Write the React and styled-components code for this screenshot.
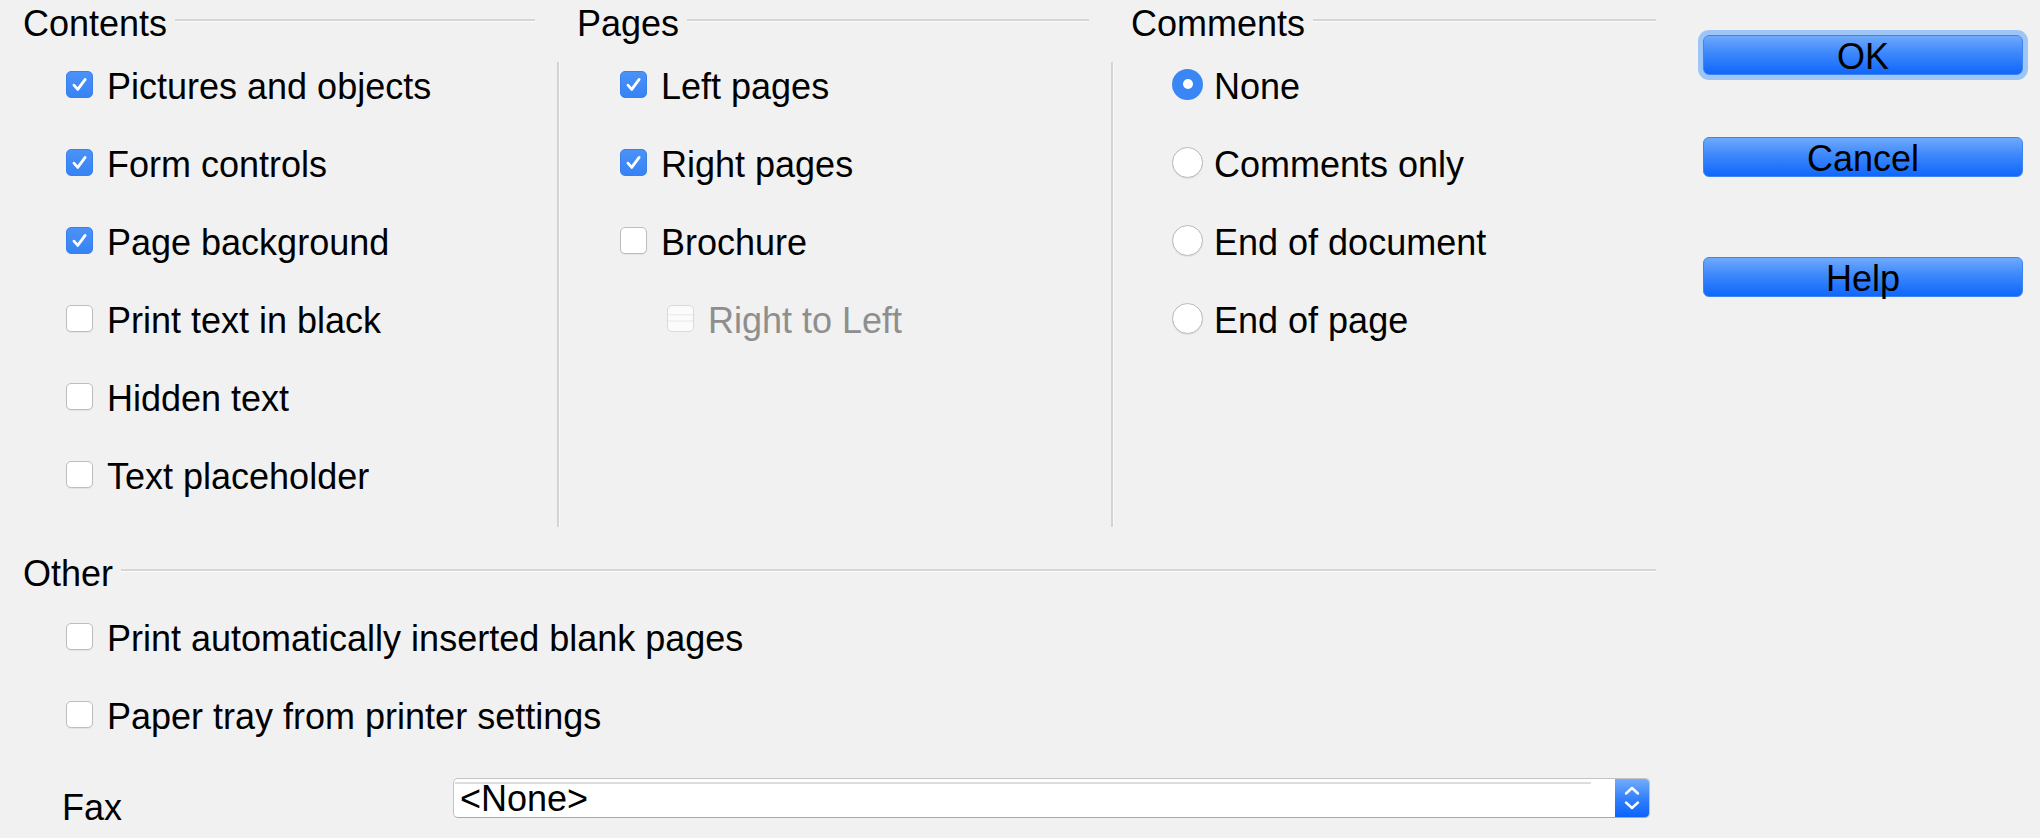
import React from 'react';
import styled, { createGlobalStyle, css } from 'styled-components';

const GlobalStyle = createGlobalStyle`
    html, body {
        margin: 0;
        padding: 0;
        background: #f1f1f1;
    }
    body {
        font-family: "Liberation Sans", Arial, Helvetica, sans-serif;
        color: #000;
    }
`;

const contents = [
    { label: 'Pictures and objects', checked: true },
    { label: 'Form controls', checked: true },
    { label: 'Page background', checked: true },
    { label: 'Print text in black' },
    { label: 'Hidden text' },
    { label: 'Text placeholder' },
];

const pages = [
    { label: 'Left pages', checked: true },
    { label: 'Right pages', checked: true },
    { label: 'Brochure' },
    { label: 'Right to Left', disabled: true, nested: true },
];

const comments = ['None', 'Comments only', 'End of document', 'End of page'];

function Check({ checked, disabled }) {
    return (
        <CheckBox $checked={checked} $disabled={disabled}>
            {checked && (
                <svg width="27" height="27" viewBox="0 0 27 27">
                    <path d="M7.5 14.2 L11.6 18.8 L19.6 8" fill="none" stroke="#fff" strokeWidth="3" strokeLinecap="round" strokeLinejoin="round" />
                </svg>
            )}
        </CheckBox>
    );
}

function CheckOption({ label, checked, disabled, nested }) {
    return (
        <OptionRow $indent={nested ? 90 : 43}>
            <Check checked={checked} disabled={disabled} />
            <Label $disabled={disabled}>{label}</Label>
        </OptionRow>
    );
}

function PrintOptionsDialog() {
    return (
        <Dialog>
            <GlobalStyle />
            <Main>
                <TopRow>
                    <Section $width={512}>
                        <Heading>
                            <Title>Contents</Title>
                            <Rule />
                        </Heading>
                        {contents.map((item) => (
                            <CheckOption key={item.label} {...item} />
                        ))}
                    </Section>
                    <Divider />
                    <Section $width={512}>
                        <Heading>
                            <Title>Pages</Title>
                            <Rule />
                        </Heading>
                        {pages.map((item) => (
                            <CheckOption key={item.label} {...item} />
                        ))}
                    </Section>
                    <Divider />
                    <Section $width={525}>
                        <Heading>
                            <Title>Comments</Title>
                            <Rule />
                        </Heading>
                        {comments.map((label, i) => (
                            <OptionRow key={label} $indent={41}>
                                <Radio $checked={i === 0} />
                                <Label $radio>{label}</Label>
                            </OptionRow>
                        ))}
                    </Section>
                </TopRow>

                <OtherHeading>
                    <Title>Other</Title>
                    <Rule />
                </OtherHeading>
                <OtherRows>
                    <CheckOption label="Print automatically inserted blank pages" />
                    <CheckOption label="Paper tray from printer settings" />
                </OtherRows>
                <FaxRow>
                    <FaxLabel>Fax</FaxLabel>
                    <Select>
                        <SelectValue>&lt;None&gt;</SelectValue>
                        <Spinner>
                            <svg width="18" height="26" viewBox="0 0 18 26">
                                <path d="M3 8.5 L9 3 L15 8.5" fill="none" stroke="#fff" strokeWidth="2.4" strokeLinecap="round" strokeLinejoin="round" />
                                <path d="M3 17.5 L9 23 L15 17.5" fill="none" stroke="#fff" strokeWidth="2.4" strokeLinecap="round" strokeLinejoin="round" />
                            </svg>
                        </Spinner>
                    </Select>
                </FaxRow>
            </Main>

            <ButtonColumn>
                <PushButton $focused>OK</PushButton>
                <PushButton $top={62}>Cancel</PushButton>
                <PushButton $top={80}>Help</PushButton>
            </ButtonColumn>
        </Dialog>
    );
}

const Dialog = styled.div`
    display: flex;
    width: 2040px;
    height: 838px;
    box-sizing: border-box;
    padding-left: 23px;
    overflow: hidden;
    background: #f1f1f1;
`;

const Main = styled.div`
    display: flex;
    flex-direction: column;
    width: 1633px;
    flex: none;
`;

const TopRow = styled.div`
    display: flex;
    height: 527px;
`;

const Section = styled.div`
    display: flex;
    flex-direction: column;
    width: ${(p) => p.$width}px;
    flex: none;
`;

const Heading = styled.div`
    display: flex;
    align-items: center;
    height: 44px;
    margin-bottom: 2px;
`;

const OtherHeading = styled(Heading)`
    margin-top: 23px;
    margin-bottom: 4px;
`;

const Title = styled.span`
    font-size: 36px;
    line-height: 44px;
    padding-top: 3px;
    white-space: nowrap;
`;

const Rule = styled.span`
    flex: 1;
    height: 2px;
    margin: -4px 0 0 8px;
    background: #d6d6d6;
    box-shadow: 0 1px 0 #fafafa;
`;

const Divider = styled.div`
    flex: none;
    width: 2px;
    margin: 62px 18px 0 22px;
    background: #d3d3d3;
    box-shadow: 1px 0 0 #f9f9f9;
`;

const OptionRow = styled.div`
    display: flex;
    align-items: center;
    height: 78px;
    padding-left: ${(p) => p.$indent}px;
`;

const CheckBox = styled.span`
    flex: none;
    width: 27px;
    height: 27px;
    box-sizing: border-box;
    border-radius: 5px;
    margin-bottom: 2px;
    display: flex;
    align-items: center;
    justify-content: center;
    ${(p) =>
        p.$checked
            ? css`
                  background: linear-gradient(#4b92f8, #3683f4);
                  border: 1px solid #3a80ea;
              `
            : p.$disabled
            ? css`
                  border: 1px solid #dadada;
                  background: linear-gradient(
                      #fbfbfb 0%, #fbfbfb 30%, #ebebeb 34%, #fbfbfb 40%,
                      #fbfbfb 55%, #ebebeb 60%, #fbfbfb 66%, #fbfbfb 100%
                  );
              `
            : css`
                  background: #fff;
                  border: 1px solid #bdbdbd;
                  box-shadow: 0 1px 1px rgba(0, 0, 0, 0.06);
              `}
`;

const Radio = styled.span`
    flex: none;
    width: 31px;
    height: 31px;
    box-sizing: border-box;
    border-radius: 50%;
    margin-bottom: 2px;
    position: relative;
    ${(p) =>
        p.$checked
            ? css`
                  background: #3b86f5;
                  &::after {
                      content: '';
                      position: absolute;
                      left: 10.5px;
                      top: 10.5px;
                      width: 10px;
                      height: 10px;
                      border-radius: 50%;
                      background: #fff;
                  }
              `
            : css`
                  background: #fff;
                  border: 1px solid #b9b9b9;
                  box-shadow: 0 1px 1px rgba(0, 0, 0, 0.06);
              `}
`;

const Label = styled.span`
    font-size: 36px;
    line-height: 44px;
    padding-top: 3px;
    white-space: nowrap;
    margin-left: ${(p) => (p.$radio ? 11 : 14)}px;
    color: ${(p) => (p.$disabled ? '#8e8e8e' : '#000')};
`;

const OtherRows = styled.div`
    display: flex;
    flex-direction: column;
`;

const FaxRow = styled.div`
    display: flex;
    align-items: flex-start;
    margin-top: 24px;
`;

const FaxLabel = styled.span`
    width: 391px;
    padding-left: 39px;
    margin-top: 8px;
    font-size: 36px;
    line-height: 44px;
`;

const Select = styled.div`
    display: flex;
    width: 1197px;
    height: 40px;
    box-sizing: border-box;
    border: 1px solid #c4c4c4;
    border-bottom-color: #a8a8a8;
    border-radius: 5px;
    background: #fff;
    overflow: hidden;
`;

const SelectValue = styled.div`
    position: relative;
    flex: 1;
    padding-left: 6px;
    font-size: 36px;
    line-height: 40px;

    &::before {
        content: '';
        position: absolute;
        top: 3px;
        left: 1px;
        right: 24px;
        height: 2px;
        background: #dcdcdc;
    }
`;

const Spinner = styled.div`
    flex: none;
    width: 34px;
    display: flex;
    align-items: center;
    justify-content: center;
    background: linear-gradient(#74acfb, #2f7efc 55%, #0a63fb);
`;

const ButtonColumn = styled.div`
    display: flex;
    flex-direction: column;
    width: 320px;
    flex: none;
    margin-left: 47px;
    padding-top: 35px;
`;

const PushButton = styled.div`
    height: 40px;
    box-sizing: border-box;
    margin-top: ${(p) => p.$top || 0}px;
    padding-top: 2px;
    border: 1px solid #3d84f2;
    border-radius: 6px;
    background: linear-gradient(#6fa9fb 0%, #3d88fb 45%, #0f67fb 100%);
    font-size: 36px;
    line-height: 38px;
    text-align: center;
    color: #000;
    ${(p) =>
        p.$focused &&
        css`
            box-shadow: 0 0 0 5px #9dc5f6;
        `}
`;

export default PrintOptionsDialog;
